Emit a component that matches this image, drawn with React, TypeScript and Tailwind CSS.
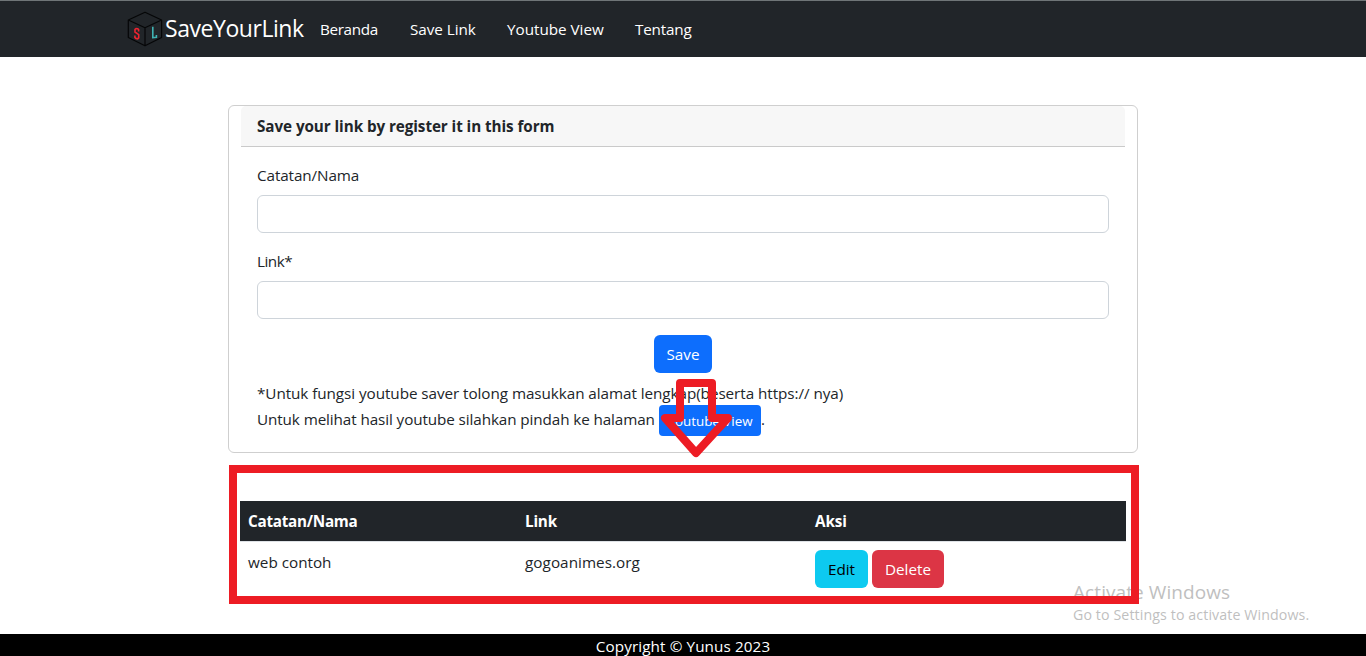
import type { ReactNode } from "react";

function Logo() {
  return (
    <svg width="36" height="36" viewBox="0 0 36 36" fill="none" className="shrink-0">
      <path
        d="M18 1.3 34.6 9v17.5L18 34.8 1.3 26.5V9L18 1.3ZM1.3 9 18 16.8 34.6 9M18 16.8v18"
        stroke="#050607"
        strokeWidth="1.2"
        strokeLinejoin="round"
      />
      <path d="M11.6 20.6v-1.9l-.9-.9-1.6-.3-1.1.9v2.6l3.7 2.6v3.2l-1 1-1.8-.4-1-1v-2" stroke="#ee2430" strokeWidth="1.6" />
      <path d="M25.8 15.7v11l3.6-.4v-2.2" stroke="#3fb3b3" strokeWidth="1.6" />
    </svg>
  );
}

function Field({ label, className }: { label: string; className: string }) {
  return (
    <label className="mb-4 block">
      <span className={`mb-2 block ${className}`}>{label}</span>
      <input className="block h-[38px] w-full rounded-md border border-[#ced4da] bg-white px-3 outline-none" />
    </label>
  );
}

function NavLink({ children, className }: { children: ReactNode; className: string }) {
  return (
    <a className={`overflow-visible whitespace-nowrap ${className}`} href="#">
      {children}
    </a>
  );
}

export default function App() {
  return (
    <div className="relative flex h-[656px] w-full flex-col overflow-hidden bg-white font-['Open_Sans',sans-serif] text-[15.25px] leading-6 text-[#212529]">
      <nav className="flex h-[57px] shrink-0 items-center border-t border-[#6f7577] bg-[#212529] pl-[127px] text-white">
        <Logo />
        <a href="#" className="mb-[2px] ml-[2px] w-[155px] text-[23px] leading-8 tracking-[-0.45px]">SaveYourLink</a>
        <NavLink className="w-[90px] tracking-[-0.35px]">Beranda</NavLink>
        <NavLink className="w-[97px] tracking-[-0.05px]">Save Link</NavLink>
        <NavLink className="w-[128px] tracking-[-0.02px]">Youtube View</NavLink>
        <NavLink className="tracking-[-0.2px]">Tentang</NavLink>
      </nav>

      <main className="flex-1">
        <section className="mt-12 ml-[228px] h-[348px] w-[910px] rounded-md border border-[#cfcfcf] px-3">
          <h1 className="rounded-t-[5px] border-b border-[#cacaca] bg-[#f7f7f7] px-4 py-2 font-bold">
            <span className="tracking-[-0.075px]">Save your link by register it in this form</span>
          </h1>
          <form className="p-4">
            <Field label="Catatan/Nama" className="tracking-[-0.1px]" />
            <Field label="Link*" className="tracking-[-0.5px]" />
            <div className="flex justify-center">
              <button type="button" className="h-[38px] w-[58px] rounded-md bg-[#0d6efd] text-white">Save</button>
            </div>
            <p className="mt-2 tracking-[-0.06px] whitespace-nowrap">*Untuk fungsi youtube saver tolong masukkan alamat lengkap(beserta https:// nya)</p>
            <div className="flex h-[31px] items-start whitespace-nowrap">
              <span className="mt-[2px] w-[402px] tracking-[-0.1px]">Untuk melihat hasil youtube silahkan pindah ke halaman</span>
              <button type="button" className="h-[31px] w-[102px] shrink-0 rounded bg-[#0d6efd] text-[13.4px] text-white">Youtube View</button>
              <span className="mt-[2px]">.</span>
            </div>
          </form>
        </section>

        <table className="mt-12 ml-[240px] w-[886px] table-fixed border-collapse text-left">
          <colgroup>
            <col className="w-[277px]" />
            <col className="w-[290px]" />
            <col />
          </colgroup>
          <thead>
            <tr className="h-10 bg-[#212529] font-bold text-white">
              <th className="p-2 tracking-[-0.27px]">Catatan/Nama</th>
              <th className="p-2 tracking-[-0.2px]">Link</th>
              <th className="p-2 tracking-[-0.1px]">Aksi</th>
            </tr>
          </thead>
          <tbody>
            <tr className="border-t border-[#dee2e6] align-top">
              <td className="p-2">web contoh</td>
              <td className="p-2 tracking-[0.05px]">gogoanimes.org</td>
              <td className="p-2">
                <div className="flex gap-1">
                  <button type="button" className="h-[38px] w-[53px] rounded-md bg-[#0dcaf0] text-black">Edit</button>
                  <button type="button" className="h-[38px] w-[72px] rounded-md bg-[#dc3545] text-white">Delete</button>
                </div>
              </td>
            </tr>
          </tbody>
        </table>
      </main>

      <footer className="h-[22px] shrink-0 bg-black text-center tracking-[0.1px] text-white">Copyright © Yunus 2023</footer>

      <div className="absolute top-[580px] left-[1073px] whitespace-nowrap text-[#bfbfbf]">
        <p className="text-[19px] leading-6 tracking-[0.08px]">Activate Windows</p>
        <p className="text-[14.2px] leading-[22px] tracking-[0.11px]">Go to Settings to activate Windows.</p>
      </div>
      <div className="absolute top-[465px] left-[229px] h-[139px] w-[910px] border-8 border-[#ed1c24]" />
      <svg className="absolute top-[375px] left-[656px]" width="80" height="86" viewBox="656 375 80 86">
        <path
          d="M680 418V383H712V418H728L696 453 665 418Z"
          fill="none"
          stroke="#ed1c24"
          strokeWidth="8"
          strokeLinejoin="round"
        />
      </svg>
    </div>
  );
}
